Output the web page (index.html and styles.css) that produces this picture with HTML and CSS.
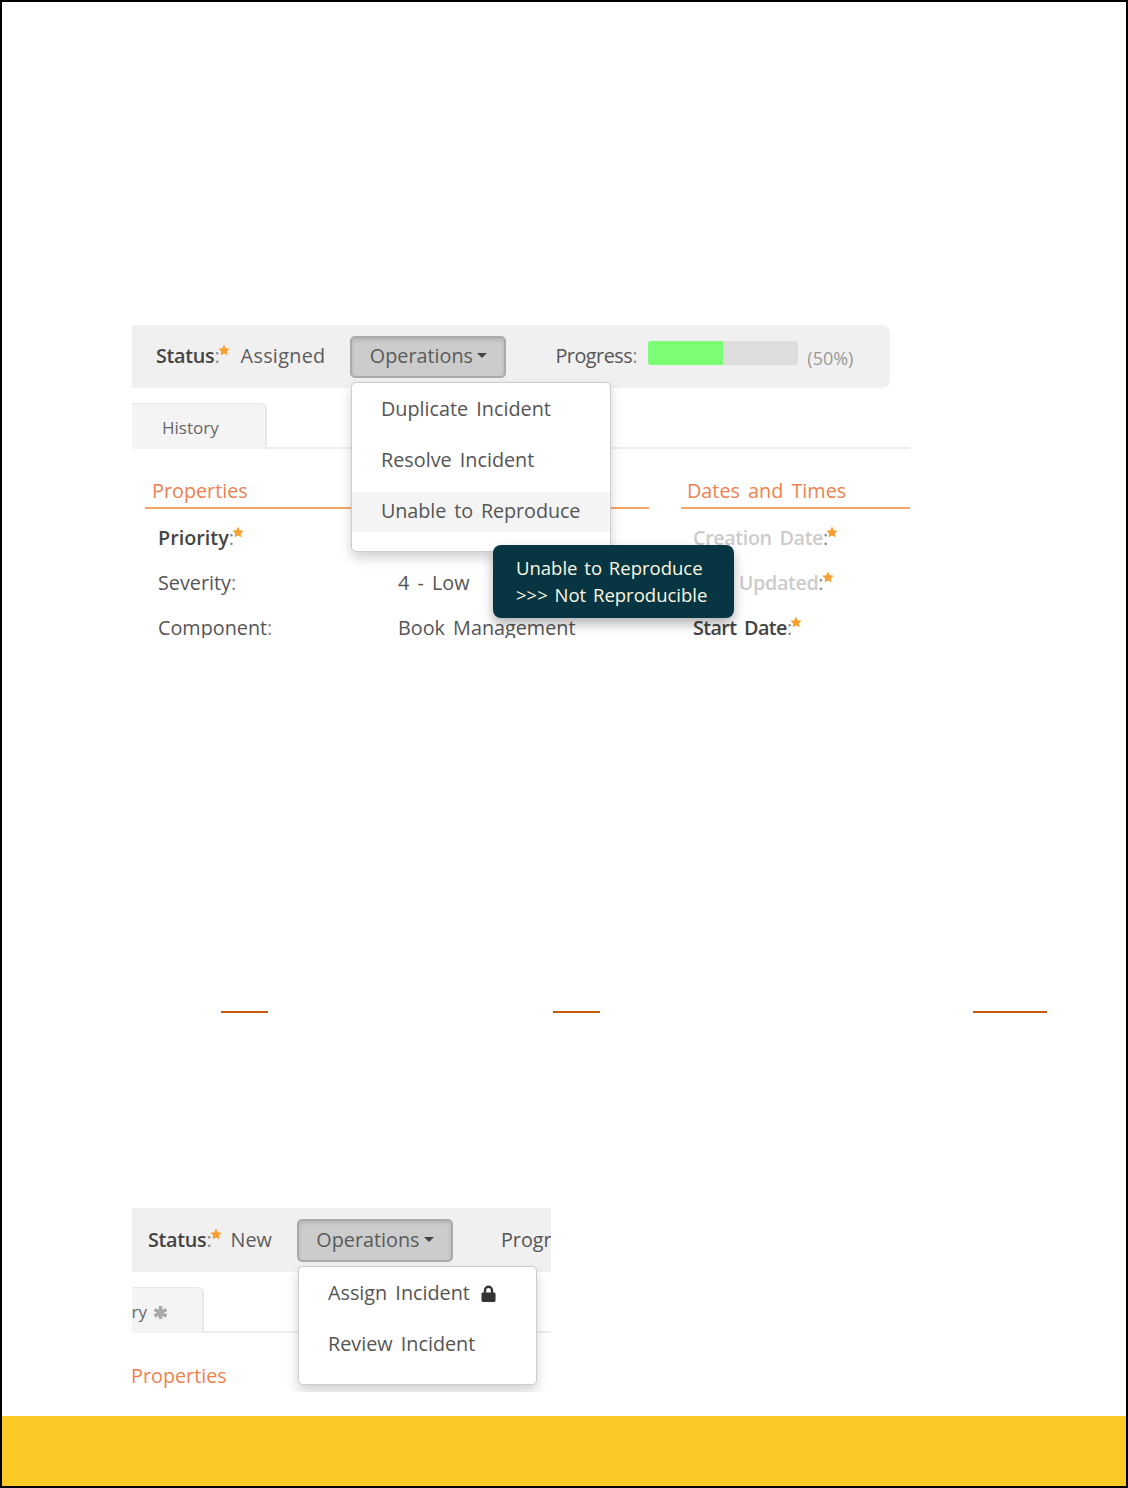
FILE: index.html
```html
<!DOCTYPE html>
<html lang="en">
<head>
<meta charset="utf-8">
<title>Incident operations</title>
<link rel="stylesheet" href="styles.css">
</head>
<body>
<svg class="defs" width="0" height="0" aria-hidden="true">
  <symbol id="star" viewBox="0 0 24 24"><path d="M12 1l3.400 7.300 7.900 1-5.800 5.500 1.500 7.900L12 18.900l-7 3.800 1.500-7.900L.7 9.300l7.900-1z"/></symbol>
</svg>
<main class="page">
  <section class="panel panel-a">
    <div class="toolbar">
      <span class="label strong">Status<span class="colon">:</span><svg class="star"><use href="#star"/></svg></span>
      <span class="status-value">Assigned</span>
      <button class="ops">Operations<i class="caret"></i></button>
      <span class="label progress-label">Progress<span class="colon">:</span></span>
      <span class="bar"><span class="fill" style="width:50%"></span></span>
      <span class="percent">(50%)</span>
    </div>
    <div class="tabs"><div class="tab">History</div></div>
    <div class="columns">
      <div class="col col-main">
        <h3 class="heading">Properties</h3>
        <div class="row"><span class="key strong">Priority<span class="colon">:</span><svg class="star"><use href="#star"/></svg></span></div>
        <div class="row"><span class="key">Severity<span class="colon">:</span></span><span class="val">4 - Low</span></div>
        <div class="row"><span class="key">Component<span class="colon">:</span></span><span class="val">Book Management</span></div>
      </div>
      <div class="col col-side">
        <h3 class="heading">Dates and Times</h3>
        <div class="row"><span class="key faded">Creation Date<span class="colon">:</span><svg class="star"><use href="#star"/></svg></span></div>
        <div class="row"><span class="key faded">Last Updated<span class="colon">:</span><svg class="star"><use href="#star"/></svg></span></div>
        <div class="row"><span class="key strong">Start Date<span class="colon">:</span><svg class="star"><use href="#star"/></svg></span></div>
      </div>
    </div>
    <ul class="menu menu-a">
      <li>Duplicate Incident</li>
      <li>Resolve Incident</li>
      <li class="active">Unable to Reproduce</li>
    </ul>
    <div class="tooltip">Unable to Reproduce<br>&gt;&gt;&gt; Not Reproducible</div>
  </section>

  <div class="rules">
    <span class="rule rule-short"></span>
    <span class="rule rule-short"></span>
    <span class="rule rule-long"></span>
  </div>

  <section class="panel panel-b">
    <div class="toolbar">
      <span class="label strong">Status<span class="colon">:</span><svg class="star"><use href="#star"/></svg></span>
      <span class="status-value">New</span>
      <button class="ops">Operations<i class="caret"></i></button>
      <span class="label progress-label">Progress:</span>
    </div>
    <div class="tabs"><div class="tab"><span>History</span><svg class="tab-mark" viewBox="0 0 24 24"><path d="M10 1h4v8.200l7-4 2 3.500-7 3.800 7 3.800-2 3.500-7-4V23h-4v-7.200l-7 4-2-3.500 7-3.800-7-3.800 2-3.500 7 4z"/></svg></div></div>
    <h3 class="heading">Properties</h3>
    <ul class="menu menu-b">
      <li>Assign Incident <svg class="lock" viewBox="0 0 16 18"><path d="M3 8V5.500a5 5 0 0 1 10 0V8h1a1.500 1.500 0 0 1 1.500 1.500v7A1.500 1.500 0 0 1 14 18H2a1.500 1.500 0 0 1-1.500-1.500v-7A1.500 1.500 0 0 1 2 8zm2.500 0h5V5.500a2.500 2.500 0 0 0-5 0z"/></svg></li>
      <li>Review Incident</li>
    </ul>
  </section>

  <footer class="band"></footer>
</main>
</body>
</html>
```
FILE: styles.css
```css
* { box-sizing: border-box; }
html, body { margin: 0; padding: 0; background: #fff; }
.defs { position: absolute; }
.page {
  width: 1128px;
  height: 1488px;
  border: 2px solid #000;
  font-family: "Open Sans", sans-serif;
  font-size: 19.8px;
  color: #555;
  word-spacing: 3px;
  display: flex;
  flex-direction: column;
  overflow: hidden;
}
.panel { position: relative; margin-left: 130px; overflow: hidden; flex: none; }
.panel-a { width: 778px; height: 313px; margin-top: 323px; }
.panel-b { width: 419px; height: 184px; margin-top: 195px; }

.toolbar {
  display: flex;
  align-items: center;
  background: #f0f0f0;
  height: 63px;
  border-radius: 0 8px 8px 0;
}
.panel-a .toolbar { width: 758px; padding-left: 24px; }
.panel-b .toolbar { height: 64px; padding-left: 16px; border-radius: 0; white-space: nowrap; }

.label, .key { color: #555; flex: none; }
.toolbar .label, .toolbar .status-value { margin-bottom: 2px; }
.strong { color: #444; font-weight: 600; letter-spacing: -.3px; }
.colon { font-weight: 400; letter-spacing: -1px; color: #888; }
.status-value { color: #5c5c5c; flex: none; letter-spacing: .3px; }
.panel-a .status-value { margin-left: 11px; }
.panel-b .status-value { margin-left: 9px; letter-spacing: 0; }

.star { width: 12px; height: 12px; fill: #f5a030; vertical-align: 7px; margin-left: -1px; }

.ops {
  font: inherit;
  color: #5a5a5a;
  word-spacing: inherit;
  flex: none;
  height: 42px;
  width: 156px;
  padding: 0 0 2px;
  margin-left: 25px;
  background: #ccc;
  border: 2px solid #aaa;
  border-radius: 5px;
  box-shadow: inset 0 2px 4px rgba(0,0,0,.12);
  display: flex;
  align-items: center;
  justify-content: center;
}
.panel-b .ops { height: 43px; }
.caret {
  width: 0; height: 0;
  margin-left: 4px;
  border-left: 5.500px solid transparent;
  border-right: 5.500px solid transparent;
  border-top: 5.500px solid #444;
}
.progress-label { margin-left: 49px; }
.panel-a .progress-label { letter-spacing: -.5px; }
.panel-b .progress-label { margin-left: 48px; }
.bar {
  width: 150px;
  height: 24px;
  margin: -8px 0 0 12px;
  background: #ddd;
  border-radius: 3px;
  overflow: hidden;
  display: block;
  flex: none;
}
.fill { display: block; height: 100%; background: #7dfd76; }
.percent { margin-left: 9px; color: #999; font-size: 18px; margin-top: 3px; }

.tabs {
  height: 61px;
  padding-top: 15px;
  border-bottom: 2px solid #eee;
}
.tab {
  width: 135px;
  height: 46px;
  padding: 12px 0 0 30px;
  font-size: 17px;
  color: #666;
  background: #f4f4f4;
  border: 1px solid #e8e8e8;
  border-width: 1px 2px 0 0;
  border-radius: 0 6px 0 0;
}
.panel-b .tab {
  width: 72px;
  padding: 12px 35px 0 0;
  display: flex;
  justify-content: flex-end;
  align-items: flex-start;
  white-space: nowrap;
  overflow: hidden;
}
.tab-mark { flex: none; width: 13px; height: 13px; fill: #aaa; stroke: #aaa; stroke-width: 2.500; margin: 6px 0 0 7px; }

.columns { display: flex; }
.col-main { width: 517px; margin-left: 13px; }
.col-side { width: 229px; margin-left: 32px; }
.heading {
  margin: 0;
  font-weight: 400;
  font-size: 19.8px;
  color: #f0814f;
  height: 60px;
  line-height: 27px;
  padding: 28px 0 0 7px;
  border-bottom: 2px solid #f7a468;
}
.col-side .heading { padding-left: 6px; }
.panel-b .heading { border: 0; padding-left: 0; margin-left: -1px; height: auto; padding-top: 29px; }
.row { display: flex; height: 45px; align-items: center; padding-left: 13px; }
.col-side .row { padding-left: 12px; }
.heading + .row { margin-top: 6px; }
.key { width: 240px; }
.col-main .key { word-spacing: 0; }
.col-main .strong { letter-spacing: 0; }
.faded { color: #ccc; font-weight: 600; }
.col-side .key { letter-spacing: -.4px; }
.col-side .strong { letter-spacing: -.6px; }
.val { color: #555; }

.menu {
  position: absolute;
  margin: 0;
  padding: 0;
  list-style: none;
  background: #fff;
  border: 1px solid #ccc;
  border-radius: 5px;
  box-shadow: 0 6px 12px rgba(0,0,0,.18);
}
.menu li { height: 40px; margin-bottom: 11px; padding: 5px 0 0 29px; color: #555; white-space: nowrap; }
.menu .active { background: #f4f4f4; margin-bottom: 0; letter-spacing: -.1px; }
.menu-a { left: 219px; top: 57px; width: 260px; height: 170px; padding-top: 7px; }
.menu-b { left: 166px; top: 58px; width: 239px; height: 119px; padding-top: 7px; }

.lock { width: 15px; height: 17px; fill: #333; vertical-align: -2px; margin-left: 3px; }

.tooltip {
  position: absolute;
  left: 361px;
  top: 220px;
  width: 241px;
  height: 73px;
  padding: 9px 0 0 23px;
  background: #073642;
  color: #fdf6e3;
  font-size: 18.500px;
  line-height: 27px;
  word-spacing: 2px;
  white-space: nowrap;
  border-radius: 8px;
  box-shadow: 0 6px 12px rgba(0,0,0,.3);
}

.rules {
  display: flex;
  flex: none;
  gap: 285px;
  margin-top: 373px;
  padding-left: 219px;
}
.rule { height: 2px; background: #c55a11; flex: none; }
.rule-short { width: 47px; }
.rule-short + .rule-long { margin-left: 88px; }
.rule-long { width: 74px; }

.band { margin-top: auto; height: 70px; background: #fcca26; }
```
